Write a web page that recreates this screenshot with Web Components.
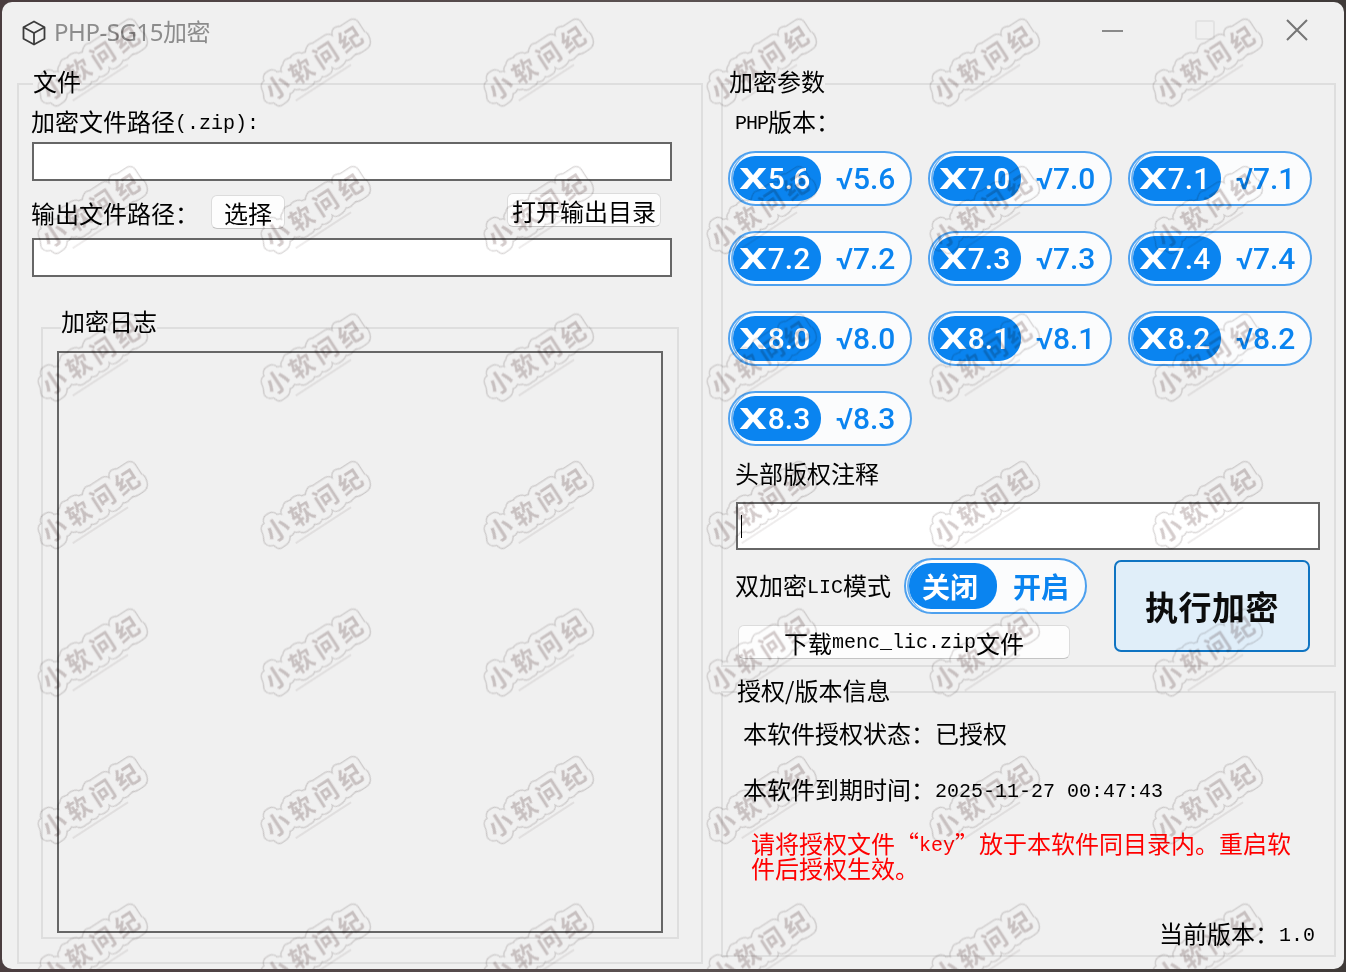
<!DOCTYPE html>
<html lang="zh-CN">
<head>
<meta charset="utf-8">
<title>PHP-SG15加密</title>
<style>
  html, body { margin: 0; height: 100%; background: linear-gradient(90deg, #4a3d3f, #5b5252 50%, #3f3a38); overflow: hidden; }
</style>
</head>
<body>
<app-window></app-window>
<script>
const comp = function (name, css, html) {
  customElements.define(name, class extends HTMLElement {
    constructor() {
      super();
      this.attachShadow({mode: 'open'}).innerHTML = `<style>${css}</style>${html}`;
    }
  });
};

comp('title-bar', `
  :host { display: flex; height: 81px; padding-top: 16px; box-sizing: border-box; color: #8c8c8c; }
  .icon { margin: 2px 8px 0 20px; }
  .text { font: 24px/28px "Noto Sans", "Noto Sans CJK SC", sans-serif; letter-spacing: -.45px; }
  .ctl { margin-left: auto; display: flex; margin-right: 1px; }
  .ctl span { width: 92px; height: 24px; display: flex; justify-content: center; }
`, `
  <svg class="icon" width="24" height="26" viewBox="0 0 24 26" fill="none" stroke="#3c3c3c" stroke-width="1.8" stroke-linejoin="round">
    <path d="M12 1.5 22.5 7.2V18.8L12 24.5 1.5 18.8V7.2Z"/>
    <path d="M1.5 7.2 12 13 22.5 7.2M12 13V24.5"/>
  </svg>
  <span class="text">PHP-SG15加密</span>
  <div class="ctl">
    <span><svg width="24" height="24" fill="none" stroke="#8a8a8a" stroke-width="2"><path d="M1 13H22"/></svg></span>
    <span><svg width="24" height="24" fill="none" stroke="#e3e3e3" stroke-width="2"><rect x="3" y="3" width="18" height="18" rx="2"/></svg></span>
    <span><svg width="24" height="24" fill="none" stroke="#757575" stroke-width="2"><path d="M2 2 22 22M22 2 2 22"/></svg></span>
  </div>
`);

comp('group-box', `
  :host { display: block; box-sizing: border-box; border: 2px solid #dedede; }
  .title { display: block; width: max-content; background: #f0f0f0; line-height: 22px; height: 24px; margin-top: var(--title-top, -15px); margin-left: var(--title-left, 0); }
`, `<span class="title"><slot name="title"></slot></span><slot></slot>`);

comp('path-input', `
  :host { display: block; box-sizing: border-box; height: 39px; border: 2px solid #666; background: #fff; position: relative; }
  .caret { position: absolute; left: 3px; top: 11px; width: 1px; height: 23px; background: #000; display: none; }
  :host([focused]) .caret { display: block; }
`, `<div class="caret"></div>`);

comp('tool-button', `
  :host { display: flex; align-items: center; justify-content: center; box-sizing: border-box; height: 34px; padding-top: 2px; background: #fdfdfd; border: 1px solid #dcdcdc; border-bottom-color: #c4c4c4; border-radius: 6px; white-space: nowrap; }
`, `<slot></slot>`);

comp('primary-button', `
  :host { display: flex; align-items: center; justify-content: center; box-sizing: border-box; background: #e0eef9; border: 2px solid #0f74c2; border-radius: 7px; font: bold 33px/40px "Noto Sans CJK SC", sans-serif; color: #0c0c0c; letter-spacing: .5px; }
`, `<slot></slot>`);

customElements.define('pill-switch', class extends HTMLElement {
  connectedCallback() {
    if (this.shadowRoot) return;
    const off = this.getAttribute('off');
    const on = this.getAttribute('on');
    const big = this.hasAttribute('cjk');
    const mark = t => t.charAt(0) === 'X' ? `<b class="x">X</b>${t.slice(1)}` : t;
    this.attachShadow({mode: 'open'}).innerHTML = `<style>
      :host { display: block; position: relative; box-sizing: border-box; width: 184px; height: 55px; border: 2px solid #4da0ee; border-radius: 28px; background: #fbfcfd; color: #0a84f0; }
      :host::before { content: ""; position: absolute; left: 1px; top: -1px; width: 60px; bottom: -1px; border-left: 2px solid #6fb3f1; border-radius: 27px 0 0 27px; }
      .row { display: flex; height: 100%; font: 500 30px/1 Roboto, "Noto Sans", sans-serif; }
      :host([cjk]) .row { font: 700 28px/1 "Noto Sans CJK SC", sans-serif; }
      .knob { box-sizing: border-box; margin: 3px 0 3px 3px; width: 88px; padding-right: 6px; background: #0a84f0; color: #fff; border-radius: 22px; display: flex; align-items: center; justify-content: center; }
      .on { flex: 1; display: flex; align-items: center; justify-content: center; }
      .x { display: inline-block; width: 30px; font-weight: 700; transform: scaleX(1.45); transform-origin: 50% 50%; text-align: center; }
    </style>
    <div class="row"><div class="knob">${big ? off : mark(off)}</div><div class="on">${on}</div></div>`;
  }
});

// cjk at 24px, latin half width like the old bitmap font
const textFont = `font: 24px/24px "Noto Sans CJK SC", sans-serif; color: #000;`;
const latin = `.a { font: 20px/1 "Liberation Mono", monospace; vertical-align: 2px; }`;

comp('file-panel', `
  :host { display: block; width: 686px; height: 881px; ${textFont} }
  ${latin}
  group-box.outer { height: 100%; }
  .body { padding-left: 12px; }
  .lbl { display: block; height: 24px; line-height: 22px; white-space: nowrap; }
  .first { margin-top: 16px; }
  path-input { width: 640px; margin-left: 1px; margin-top: 8px; }
  .row { display: flex; align-items: flex-start; margin-top: 12px; height: 36px; width: 641px; }
  .row .lbl { margin-top: 9px; }
  .pick { width: 74px; margin: 2px 0 0 12px; }
  .open { width: 154px; margin-left: auto; margin-right: 11px; }
  .second { margin-top: 9px; }
  group-box.log { width: 638px; height: 612px; margin: 50px 0 0 10px; --title-top: -19px; --title-left: 18px; }
  .logbox { box-sizing: border-box; width: 606px; height: 582px; margin: 17px 0 0 14px; border: 2px solid #666; }
`, `
  <group-box class="outer" style="--title-left:14px">
    <span slot="title">文件</span>
    <div class="body">
      <span class="lbl first">加密文件路径<span class="a">(.zip):</span></span>
      <path-input></path-input>
      <div class="row">
        <span class="lbl">输出文件路径：</span>
        <tool-button class="pick">选择</tool-button>
        <tool-button class="open">打开输出目录</tool-button>
      </div>
      <path-input class="second"></path-input>
      <group-box class="log">
        <span slot="title">加密日志</span>
        <div class="logbox"></div>
      </group-box>
    </div>
  </group-box>
`);

comp('encrypt-panel', `
  :host { display: block; height: 584px; ${textFont} }
  ${latin}
  group-box { height: 100%; --title-left: 6px; }
  .lbl { display: block; margin-left: 12px; height: 24px; line-height: 22px; white-space: nowrap; }
  .php { margin-top: 16px; }
  .php .a { letter-spacing: -1px; }
  .grid { display: grid; grid-template-columns: repeat(3, 184px); grid-auto-rows: 55px; column-gap: 16px; row-gap: 25px; margin: 17px 0 0 5px; }
  .head { margin-top: 16px; }
  path-input { width: 584px; height: 48px; margin: 16px 0 0 13px; }
  .bottom { display: flex; margin: 8px 0 0 12px; }
  .left { width: 352px; }
  .mode { display: flex; align-items: flex-start; }
  .mode .lbl { margin: 16px 13px 0 0; }
  .mode pill-switch { height: 56px; }
  .dl { width: 332px; margin: 11px 0 0 3px; }
  primary-button { width: 196px; height: 92px; margin: 2px 0 0 27px; }
`, `
  <group-box>
    <span slot="title">加密参数</span>
    <span class="lbl php"><span class="a">PHP</span>版本：</span>
    <div class="grid">
      <pill-switch off="X5.6" on="√5.6"></pill-switch>
      <pill-switch off="X7.0" on="√7.0"></pill-switch>
      <pill-switch off="X7.1" on="√7.1"></pill-switch>
      <pill-switch off="X7.2" on="√7.2"></pill-switch>
      <pill-switch off="X7.3" on="√7.3"></pill-switch>
      <pill-switch off="X7.4" on="√7.4"></pill-switch>
      <pill-switch off="X8.0" on="√8.0"></pill-switch>
      <pill-switch off="X8.1" on="√8.1"></pill-switch>
      <pill-switch off="X8.2" on="√8.2"></pill-switch>
      <pill-switch off="X8.3" on="√8.3"></pill-switch>
    </div>
    <span class="lbl head">头部版权注释</span>
    <path-input focused></path-input>
    <div class="bottom">
      <div class="left">
        <div class="mode">
          <span class="lbl" style="margin-left:0">双加密<span class="a">LIC</span>模式</span>
          <pill-switch cjk off="关闭" on="开启"></pill-switch>
        </div>
        <tool-button class="dl">下载<span class="a">menc_lic.zip</span>文件</tool-button>
      </div>
      <primary-button>执行加密</primary-button>
    </div>
  </group-box>
`);

comp('license-panel', `
  :host { display: block; height: 266px; ${textFont} }
  ${latin}
  group-box { height: 100%; --title-top: -14px; --title-left: 14px; }
  .line { display: block; margin-left: 20px; height: 24px; line-height: 22px; white-space: nowrap; }
  .state { margin-top: 19px; }
  .date { margin-top: 32px; }
  .note { color: #f00; margin: 29px 0 1px 28px; width: 545px; }
  .ver { text-align: right; margin: 42px 19px 0 0; line-height: 22px; }
`, `
  <group-box>
    <span slot="title">授权/版本信息</span>
    <span class="line state">本软件授权状态：已授权</span>
    <span class="line date">本软件到期时间：<span class="a">2025-11-27 00:47:43</span></span>
    <div class="note">请将授权文件“<span class="a">key</span>”放于本软件同目录内。重启软件后授权生效。</div>
    <div class="ver">当前版本：<span class="a">1.0</span></div>
  </group-box>
`);

comp('water-mark', `
  :host { position: absolute; left: 0; top: 0; width: 1346px; height: 972px; pointer-events: none; mix-blend-mode: multiply; }
  svg { display: block; }
  text { font: bold 24px "Noto Sans CJK SC", sans-serif; letter-spacing: 5px; text-anchor: middle; }
`, `
  <svg width="1346" height="972" aria-hidden="true">
    <defs>
      <filter id="soft"><feGaussianBlur stdDeviation="0.6"/></filter>
      <pattern id="wm" width="223" height="147.5" x="-20" y="-10.25" patternUnits="userSpaceOnUse">
        <g transform="translate(111.5 73.75) rotate(-33)" filter="url(#soft)">
          <text x="2" y="8" fill="none" stroke="#d6d3d3" stroke-width="14" stroke-linejoin="round">小软问纪</text>
          <text x="2" y="8" fill="#fff" stroke="#fff" stroke-width="11.5" stroke-linejoin="round">小软问纪</text>
          <text x="2" y="8" fill="#d4cccc">小软问纪</text>
          <path d="M-36 21H30" stroke="#e8e6e6" stroke-width="1.5"/>
        </g>
      </pattern>
    </defs>
    <rect width="1346" height="972" fill="url(#wm)"/>
  </svg>
`);

comp('app-window', `
  :host { display: block; position: relative; box-sizing: border-box; width: 1342px; height: 967px; margin: 2px 0 0 2px; background: #f0f0f0; border-radius: 10px; overflow: hidden; }
  .main { display: flex; gap: 18px; padding-left: 15px; }
  .side { width: 615px; display: flex; flex-direction: column; gap: 24px; }
  water-mark { margin: -2px 0 0 -2px; }
`, `
  <title-bar></title-bar>
  <div class="main">
    <file-panel></file-panel>
    <div class="side">
      <encrypt-panel></encrypt-panel>
      <license-panel></license-panel>
    </div>
  </div>
  <water-mark></water-mark>
`);
</script>
</body>
</html>
